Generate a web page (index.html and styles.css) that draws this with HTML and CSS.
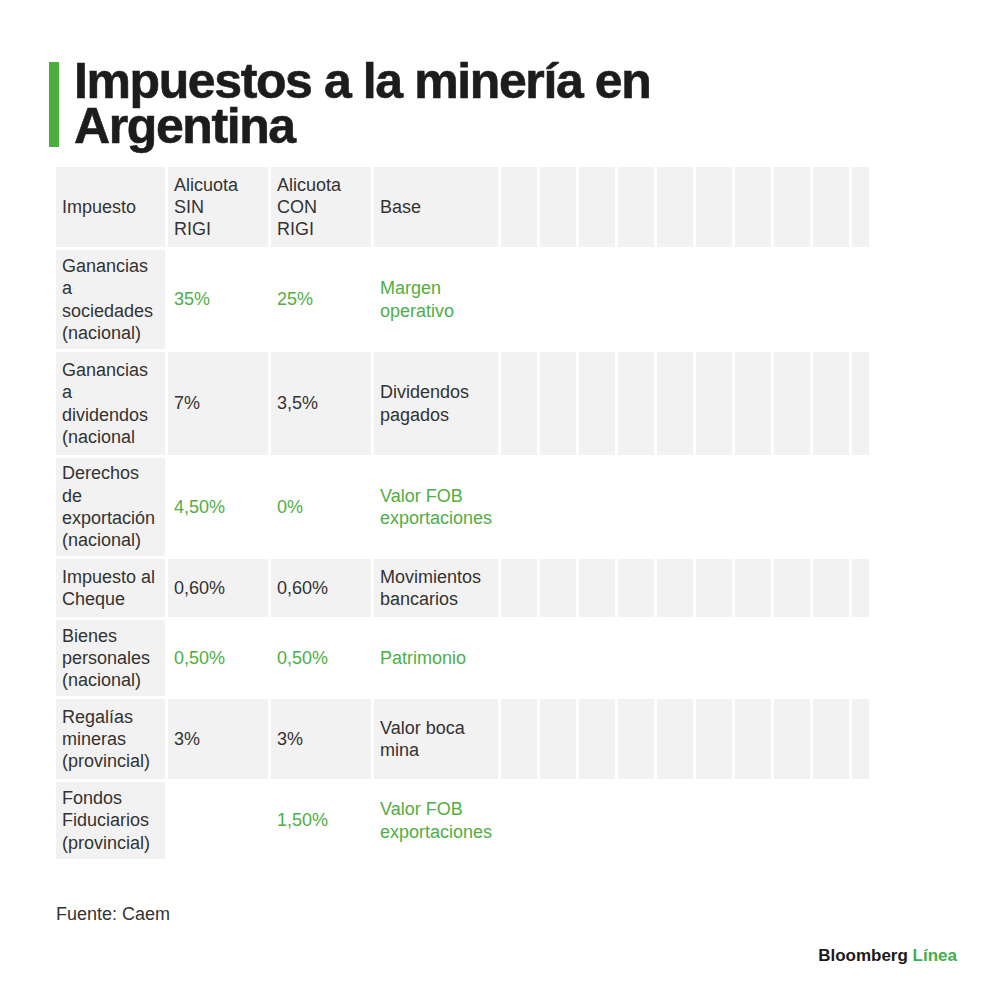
FILE: index.html
```html
<!DOCTYPE html>
<html lang="es">
<head>
<meta charset="utf-8">
<title>Impuestos a la minería en Argentina</title>
<link rel="stylesheet" href="styles.css">
</head>
<body>
<main class="page">
  <header class="title-block">
    <div class="title-bar"></div>
    <h1 class="title">Impuestos a la minería en Argentina</h1>
  </header>

  <table class="tax-table">
    <colgroup>
      <col class="c-name"><col class="c-rate"><col class="c-rate"><col class="c-base">
      <col class="c-empty"><col class="c-empty"><col class="c-empty"><col class="c-empty"><col class="c-empty">
      <col class="c-empty"><col class="c-empty"><col class="c-empty"><col class="c-empty"><col class="c-last">
    </colgroup>
    <thead>
      <tr class="r-head">
        <th>Impuesto</th>
        <th>Alicuota<br>SIN<br>RIGI</th>
        <th>Alicuota<br>CON<br>RIGI</th>
        <th>Base</th>
        <th></th><th></th><th></th><th></th><th></th><th></th><th></th><th></th><th></th><th></th>
      </tr>
    </thead>
    <tbody>
      <tr class="r-hl r1">
        <td class="name">Ganancias a sociedades (nacional)</td>
        <td>35%</td><td>25%</td><td>Margen operativo</td>
        <td></td><td></td><td></td><td></td><td></td><td></td><td></td><td></td><td></td><td></td>
      </tr>
      <tr class="r-alt r2">
        <td class="name">Ganancias a dividendos (nacional</td>
        <td>7%</td><td>3,5%</td><td>Dividendos pagados</td>
        <td></td><td></td><td></td><td></td><td></td><td></td><td></td><td></td><td></td><td></td>
      </tr>
      <tr class="r-hl r3">
        <td class="name">Derechos de exportación (nacional)</td>
        <td>4,50%</td><td>0%</td><td>Valor FOB exportaciones</td>
        <td></td><td></td><td></td><td></td><td></td><td></td><td></td><td></td><td></td><td></td>
      </tr>
      <tr class="r-alt r4">
        <td class="name">Impuesto al Cheque</td>
        <td>0,60%</td><td>0,60%</td><td>Movimientos bancarios</td>
        <td></td><td></td><td></td><td></td><td></td><td></td><td></td><td></td><td></td><td></td>
      </tr>
      <tr class="r-hl r5">
        <td class="name">Bienes personales (nacional)</td>
        <td>0,50%</td><td>0,50%</td><td>Patrimonio</td>
        <td></td><td></td><td></td><td></td><td></td><td></td><td></td><td></td><td></td><td></td>
      </tr>
      <tr class="r-alt r6">
        <td class="name">Regalías mineras (provincial)</td>
        <td>3%</td><td>3%</td><td>Valor boca mina</td>
        <td></td><td></td><td></td><td></td><td></td><td></td><td></td><td></td><td></td><td></td>
      </tr>
      <tr class="r-hl r7">
        <td class="name">Fondos Fiduciarios (provincial)</td>
        <td></td><td>1,50%</td><td>Valor FOB exportaciones</td>
        <td></td><td></td><td></td><td></td><td></td><td></td><td></td><td></td><td></td><td></td>
      </tr>
    </tbody>
  </table>

  <p class="source">Fuente: Caem</p>

  <footer class="brand-row">
    <div class="brand"><span class="brand-main">Bloomberg</span> <span class="brand-accent">Línea</span></div>
  </footer>
</main>
</body>
</html>
```

FILE: styles.css
```css
* { box-sizing: border-box; }

html, body {
  margin: 0;
  padding: 0;
  background: #ffffff;
}

body {
  font-family: "Liberation Sans", Arial, Helvetica, sans-serif;
  color: #333333;
}

.page {
  width: 1000px;
  height: 1000px;
  padding: 59px 43px 0 49px;
}

/* Title */
.title-block {
  display: flex;
  align-items: flex-start;
  gap: 15px;
}

.title-bar {
  flex: 0 0 10px;
  width: 10px;
  height: 85px;
  margin-top: 3px;
  background: #4cae3c;
}

.title {
  margin: 0;
  font-size: 50px;
  line-height: 45px;
  font-weight: 700;
  letter-spacing: -1.4px;
  color: #1c1c1c;
  -webkit-text-stroke: 0.6px #1c1c1c;
  width: 600px;
}

/* Table */
.tax-table {
  margin: 15px 0 0 4px;
  border-collapse: separate;
  border-spacing: 3px;
  table-layout: fixed;
  width: 819px;
  font-size: 18px;
  line-height: 22.3px;
}

.c-name { width: 109px; }
.c-rate { width: 100px; }
.c-base { width: 124px; }
.c-empty { width: 36px; }
.c-last { width: 17px; }

.tax-table th,
.tax-table td {
  padding: 0 5px 0 6px;
  vertical-align: middle;
  text-align: left;
  font-weight: 400;
  color: #333333;
  overflow: visible;
}

.tax-table td:nth-child(4) {
  padding-right: 2px;
}

.r-head th { background: #f2f2f2; height: 80px; }
.r-alt td { background: #f2f2f2; }
.r-hl td { background: #ffffff; color: #4fae45; }
.tax-table td.name { background: #f2f2f2; color: #333333; }

.r1 td { height: 99px; }
.r2 td { height: 103px; }
.r3 td { height: 98px; }
.r4 td { height: 58px; }
.r5 td { height: 76px; }
.r6 td { height: 80px; }
.r7 td { height: 77px; }

/* Source */
.source {
  margin: 41px 0 0 7px;
  font-size: 18px;
  line-height: 22px;
  color: #333333;
}

/* Brand */
.brand-row {
  display: flex;
  justify-content: flex-end;
  margin-top: 21px;
}

.brand {
  font-size: 17px;
  line-height: 20px;
  font-weight: 700;
  white-space: nowrap;
}

.brand-main { color: #1a1a1a; }
.brand-accent { color: #3fae48; }
```
